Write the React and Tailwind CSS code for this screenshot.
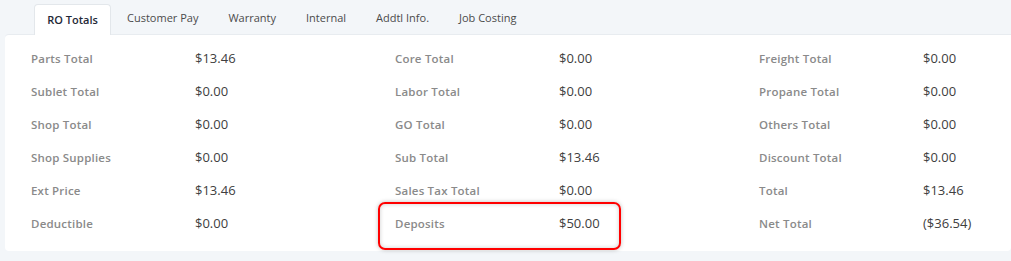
const tabs = ['RO Totals', 'Customer Pay', 'Warranty', 'Internal', 'Addtl Info.', 'Job Costing'];

const rows = [
  [['Parts Total', '$13.46'], ['Core Total', '$0.00'], ['Freight Total', '$0.00']],
  [['Sublet Total', '$0.00'], ['Labor Total', '$0.00'], ['Propane Total', '$0.00']],
  [['Shop Total', '$0.00'], ['GO Total', '$0.00'], ['Others Total', '$0.00']],
  [['Shop Supplies', '$0.00'], ['Sub Total', '$13.46'], ['Discount Total', '$0.00']],
  [['Ext Price', '$13.46'], ['Sales Tax Total', '$0.00'], ['Total', '$13.46']],
  [['Deductible', '$0.00'], ['Deposits', '$50.00'], ['Net Total', '($36.54)']],
];

function Cell({ label, value }) {
  const marked = label === 'Deposits';
  return (
    <div className="relative flex h-[33px] items-center">
      {marked && (
        <span className="absolute left-[-17px] top-[-5px] h-[48px] w-[243px] rounded-[7px] border-2 border-[#ff0000] shadow-[0_0_4px_rgba(0,0,0,0.25),inset_0_0_4px_rgba(0,0,0,0.2)]" />
      )}
      <div className="w-[164px] text-[11.5px] font-semibold tracking-[0.2px] text-[#8a8a8a]">{label}</div>
      <div className="text-[13px] text-[#404040]">{value}</div>
    </div>
  );
}

export default function App() {
  return (
    <div className="h-[261px] w-[1011px] bg-[#f3f6f9] pl-[5px] font-['Open_Sans',sans-serif]">
      <div className="flex h-[34px] items-end pl-[29px]">
        {tabs.map((t, i) =>
          i === 0 ? (
            <div
              key={t}
              className="relative top-px mr-px flex h-[31px] w-[77px] items-center justify-center rounded-t-[4px] border border-b-0 border-[#e3e7eb] bg-white text-[11px] font-semibold text-[#1f2937]"
            >
              {t}
            </div>
          ) : (
            <div key={t} className="flex h-[31px] items-center px-[15px] text-[11px] text-[#4b4b4b]">
              {t}
            </div>
          )
        )}
      </div>
      <div className="h-[217px] rounded-b-[4px] rounded-tl-[4px] border-t border-[#e8ecf0] bg-white pl-[26px] pt-[7px]">
        {rows.map((r, i) => (
          <div key={i} className="grid grid-cols-[364px_364px_1fr]">
            {r.map(([l, v]) => (
              <Cell key={l} label={l} value={v} />
            ))}
          </div>
        ))}
      </div>
    </div>
  );
}
